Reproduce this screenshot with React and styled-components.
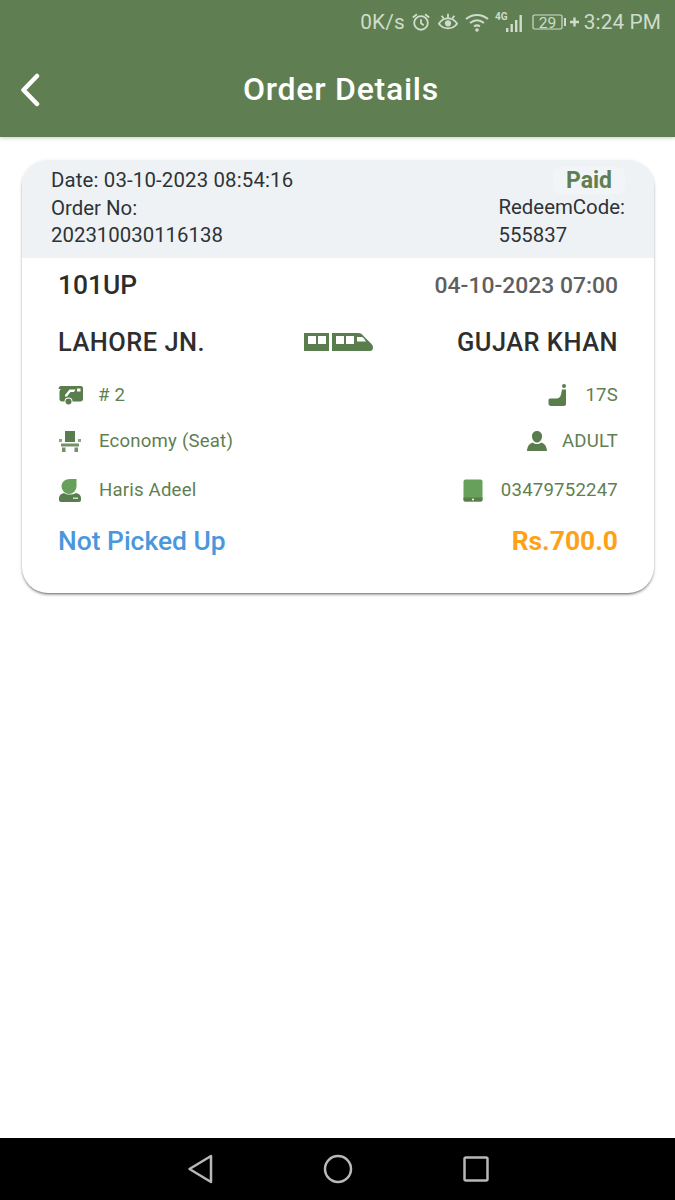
import React from "react";
import styled, { createGlobalStyle } from "styled-components";

const Global = createGlobalStyle`
  html, body { margin: 0; padding: 0; background: #fff; }
  body { font-family: Roboto, "Noto Sans", sans-serif; }
`;
const Page = styled.div`
  width: 675px; height: 1200px; display: flex; flex-direction: column; overflow: hidden; background: #fff;
`;
const Header = styled.header`
  height: 137px; flex: none; background: #5f7f52; display: flex; flex-direction: column;
  box-shadow: 0 1px 4px rgba(0,0,0,.22);
`;
const StatusBar = styled.div`
  height: 43px; display: flex; align-items: center; justify-content: flex-end; gap: 6px;
  padding-right: 14px; color: #cfdccb; font-size: 20.8px; letter-spacing: .1px;
`;
const StatusTime = styled.span` margin-left: -2px; `;
const TitleBar = styled.div`
  flex: 1; display: flex; align-items: center; justify-content: center; position: relative; padding: 0 0 2px 7px;
`;
const BackButton = styled.svg` position: absolute; left: 20px; top: 30px; `;
const Title = styled.h1`
  margin: 0; color: #fff; font-size: 32px; font-weight: 500; letter-spacing: .75px;
`;
const Main = styled.main` flex: 1; padding: 23px 21px 0 22px; `;
const Card = styled.section`
  height: 433px; background: #fff; border-radius: 26px; overflow: hidden;
  box-shadow: 0 2px 3px -1px rgba(0,0,0,.6), 0 1px 4px rgba(0,0,0,.1);
`;
const CardTop = styled.div`
  height: 98px; background: #eef2f5; display: flex; justify-content: space-between;
  padding: 7px 29px 0 29px; box-sizing: border-box; color: #2f3336; font-size: 20.4px; line-height: 27.5px;
`;
const TopColumn = styled.div` display: flex; flex-direction: column; align-items: ${p => p.$end ? "flex-end" : "flex-start"}; `;
const PaidBadge = styled.span`
  background: #f2f5f7; color: #5f7f52; font-weight: 700; font-size: 23px; line-height: 26px;
  padding: 1px 13px 0; border-radius: 8px;
`;
const TextLine = styled.div``;
const DateLine = styled.div` letter-spacing: .15px; `;
const CodeLine = styled.div` align-self: flex-start; `;
const Body = styled.div`
  padding: 12px 36px 0 36px; display: flex; flex-direction: column;
`;
const Row = styled.div`
  display: flex; justify-content: space-between; align-items: center;
  margin-top: ${p => p.$mt || 0}px; height: 30px;
`;
const TrainNo = styled.span` font-size: 26.4px; font-weight: 500; color: #2c2c2c; `;
const DepTime = styled.span` font-size: 22.9px; font-weight: 500; color: #5f5f5f; `;
const Station = styled.span` font-size: 25.4px; font-weight: 500; color: #2e2e2e; letter-spacing: .5px; flex: 1; text-align: ${p => p.$right ? "right" : "left"}; `;
const Info = styled.div`
  display: flex; align-items: center; gap: ${p => p.$gap || 15}px; color: #5f7f52; font-size: 18.6px; letter-spacing: .2px;
`;
const StatusText = styled.span` font-size: 26.4px; font-weight: 500; color: #4a97dd; `;
const Price = styled.span` font-size: 26.4px; font-weight: 700; color: #ffa115; `;
const Spacer = styled.div` flex: 1; `;
const NavBar = styled.nav`
  height: 62px; flex: none; background: #000; display: flex; align-items: center; justify-content: center; gap: 110px;
`;

const G = "#5a7d4e";

const Alarm = () => (
  <svg width="20" height="20" viewBox="0 0 22 22" fill="none" stroke="#cfdccb" strokeWidth="2">
    <circle cx="11" cy="12" r="7.500" /><path d="M11 8v4.500l3 2M2 6l4.500-3.500M20 6l-4.500-3.500" />
  </svg>
);
const Eye = () => (
  <svg width="22" height="20" viewBox="0 0 24 22" fill="none" stroke="#cfdccb" strokeWidth="2">
    <path d="M2 13c3-5 6-6 10-6s7 1 10 6c-3 4-6 5-10 5s-7-1-10-5zM5 4l2 3M12 2v4M19 4l-2 3" />
    <circle cx="12" cy="12.500" r="3.400" fill="#cfdccb" stroke="none" />
  </svg>
);
const Wifi = () => (
  <svg width="24" height="22" viewBox="0 0 24 22" fill="none" stroke="#cfdccb" strokeWidth="2">
    <path d="M1 8c6.500-5.500 15.500-5.500 22 0M5 12c4.500-3.600 9.500-3.600 14 0M9 15.500c2-1.500 4-1.500 6 0" />
    <circle cx="12" cy="19" r="1.800" fill="#cfdccb" stroke="none" />
  </svg>
);
const Signal = () => (
  <svg width="31" height="24" viewBox="0 0 31 24">
    <text x="0" y="10" fontSize="10" fontWeight="700" fill="#cfdccb" fontFamily="Roboto, sans-serif">4G</text>
    <g fill="#cfdccb">
      <rect x="11" y="18" width="2.400" height="4" /><rect x="15.500" y="14" width="2.400" height="8" />
      <rect x="20" y="10" width="2.400" height="12" /><rect x="24.500" y="5" width="2.400" height="17" />
    </g>
  </svg>
);
const Battery = () => (
  <svg width="48" height="18" viewBox="0 0 48 18">
    <rect x="1" y="2" width="29" height="14" rx="1.500" fill="none" stroke="#cfdccb" strokeWidth="1.200" />
    <text x="15.500" y="14.500" fontSize="15.500" textAnchor="middle" fill="#cfdccb" fontFamily="Roboto, sans-serif">29</text>
    <rect x="32" y="5" width="2" height="8" fill="#cfdccb" />
    <path d="M38 9h9M42.500 4.500v9" stroke="#cfdccb" strokeWidth="2.400" />
  </svg>
);
const Train = () => (
  <svg width="69" height="20" viewBox="0 0 69 20">
    <path fill={G} d="M0 1h25v18H0z" />
    <path fill="#fff" d="M4 4h8v8H4zM14 4h8v8h-8z" />
    <path fill={G} d="M28 1h26c3 0 4 1 6 3.500l6 6c2 2 3 3 3 5 0 2-1 3.500-3 3.500H28z" />
    <path fill="#fff" d="M32 4h8v8h-8zM42 4h8v8h-8zM53 5h4c1.500 0 2.500.5 5 4.500H53z" />
  </svg>
);
const Coach = () => (
  <svg width="25" height="20" viewBox="0 0 25 20">
    <path fill={G} d="M3 1h20c1 0 2 1 2 2v11c0 1.500-1 2.500-2.500 2.500H4c-1.500 0-2.500-1-2.500-2.500V7c0-1.500.5-2.500 1.500-3H0.500C.5 2.500 1.500 1 3 1z" />
    <circle cx="10.500" cy="16.500" r="4" fill="#fff" />
    <circle cx="10.500" cy="16.500" r="3" fill={G} />
    <path fill="#fff" d="M7 10l4.500-5.500h6L16 7h-3.500l-3.500 4.500H7zM19 3.500h3.500V6.500H19z" />
  </svg>
);
const Chair = () => (
  <svg width="24" height="21" viewBox="0 0 24 21" fill={G}>
    <path d="M7 0h10v11H7z" />
    <path d="M1 8h3v3H1zM20 8h3v3h-3z" opacity=".7" />
    <path d="M3 12.500h18v3H3zM4 16.500h3.500V21H4zM16.500 16.500H20V21h-3.500z" opacity=".85" />
  </svg>
);
const Agent = () => (
  <svg width="24" height="25" viewBox="0 0 24 25">
    <path fill="#66a05a" d="M12 1h6.500v7.500a7.500 7.500 0 0 1-15 0C3.500 4 7 1 12 1z" />
    <path fill={G} d="M6 15c3 2 8 2 12 0 3 .5 5 2.500 5 5v2c0 1-1 2-2 2H3c-1 0-2-1-2-2v-2c0-2.500 2-4.500 5-5z" />
    <path fill="#cfe0c8" d="M15 19.500h5V21h-5z" />
  </svg>
);
const Seat = () => (
  <svg width="20" height="24" viewBox="0 0 20 24" fill={G}>
    <circle cx="16" cy="3" r="2" />
    <path d="M14 6.500h4V21c0 1-1 2-2 2H3c-1.500 0-2.500-1-2.500-2.500V17c0-1 1-1.500 2-1.500h6c2 0 4-1.500 4.500-4z" />
  </svg>
);
const Person = () => (
  <svg width="22" height="22" viewBox="0 0 22 22" fill={G}>
    <path d="M11 1c3 0 5 2.200 5 5.200 0 3.300-2.300 6.300-5 6.300S6 9.500 6 6.200C6 3.200 8 1 11 1z" />
    <path d="M7 12.500c2 2 6 2 8 0 3.500 1 5.500 3 6 8.500H1c.5-5.500 2.500-7.500 6-8.500z" />
  </svg>
);
const Tablet = () => (
  <svg width="20" height="23" viewBox="0 0 20 23">
    <rect x="0.500" y="0.500" width="19" height="22" rx="2" fill="#66a05a" />
    <path fill={G} d="M0.500 18.500h19V21c0 1-1 1.500-2 1.500h-15c-1 0-2-.5-2-1.500z" />
    <circle cx="10" cy="20.500" r="1" fill="#fff" />
  </svg>
);

export default function App() {
  return (
    <Page>
      <Global />
      <Header>
        <StatusBar>
          <span>0K/s</span>
          <Alarm /><Eye /><Wifi /><Signal /><Battery />
          <StatusTime>3:24 PM</StatusTime>
        </StatusBar>
        <TitleBar>
          <BackButton width="22" height="34" viewBox="0 0 22 34" fill="none" stroke="#fff" strokeWidth="4.500" strokeLinecap="round" strokeLinejoin="round">
            <path d="M17 3L3.500 17 17 31" />
          </BackButton>
          <Title>Order Details</Title>
        </TitleBar>
      </Header>
      <Main>
        <Card>
          <CardTop>
            <TopColumn>
              <DateLine>Date: 03-10-2023 08:54:16</DateLine>
              <TextLine>Order No:</TextLine>
              <TextLine>202310030116138</TextLine>
            </TopColumn>
            <TopColumn $end>
              <PaidBadge>Paid</PaidBadge>
              <TextLine>RedeemCode:</TextLine>
              <CodeLine>555837</CodeLine>
            </TopColumn>
          </CardTop>
          <Body>
            <Row>
              <TrainNo>101UP</TrainNo>
              <DepTime>04-10-2023 07:00</DepTime>
            </Row>
            <Row $mt={27}>
              <Station>LAHORE JN.</Station>
              <Train />
              <Station $right>GUJAR KHAN</Station>
            </Row>
            <Row $mt={23}>
              <Info><Coach /># 2</Info>
              <Info $gap={17}><Seat />17S</Info>
            </Row>
            <Row $mt={16}>
              <Info $gap={17}><Chair />Economy (Seat)</Info>
              <Info $gap={14}><Person />ADULT</Info>
            </Row>
            <Row $mt={19}>
              <Info $gap={17}><Agent />Haris Adeel</Info>
              <Info $gap={18}><Tablet />03479752247</Info>
            </Row>
            <Row $mt={21}>
              <StatusText>Not Picked Up</StatusText>
              <Price>Rs.700.0</Price>
            </Row>
          </Body>
        </Card>
      </Main>
      <Spacer />
      <NavBar>
        <svg width="26" height="30" viewBox="0 0 26 30" fill="none" stroke="#b8b8b8" strokeWidth="2.500" strokeLinejoin="round">
          <path d="M24 2v26L2.500 15z" />
        </svg>
        <svg width="30" height="30" viewBox="0 0 30 30" fill="none" stroke="#b8b8b8" strokeWidth="2.500">
          <circle cx="15" cy="15" r="13" />
        </svg>
        <svg width="26" height="26" viewBox="0 0 26 26" fill="none" stroke="#b8b8b8" strokeWidth="2.500">
          <rect x="1.500" y="1.500" width="23" height="23" rx="1.500" />
        </svg>
      </NavBar>
    </Page>
  );
}
